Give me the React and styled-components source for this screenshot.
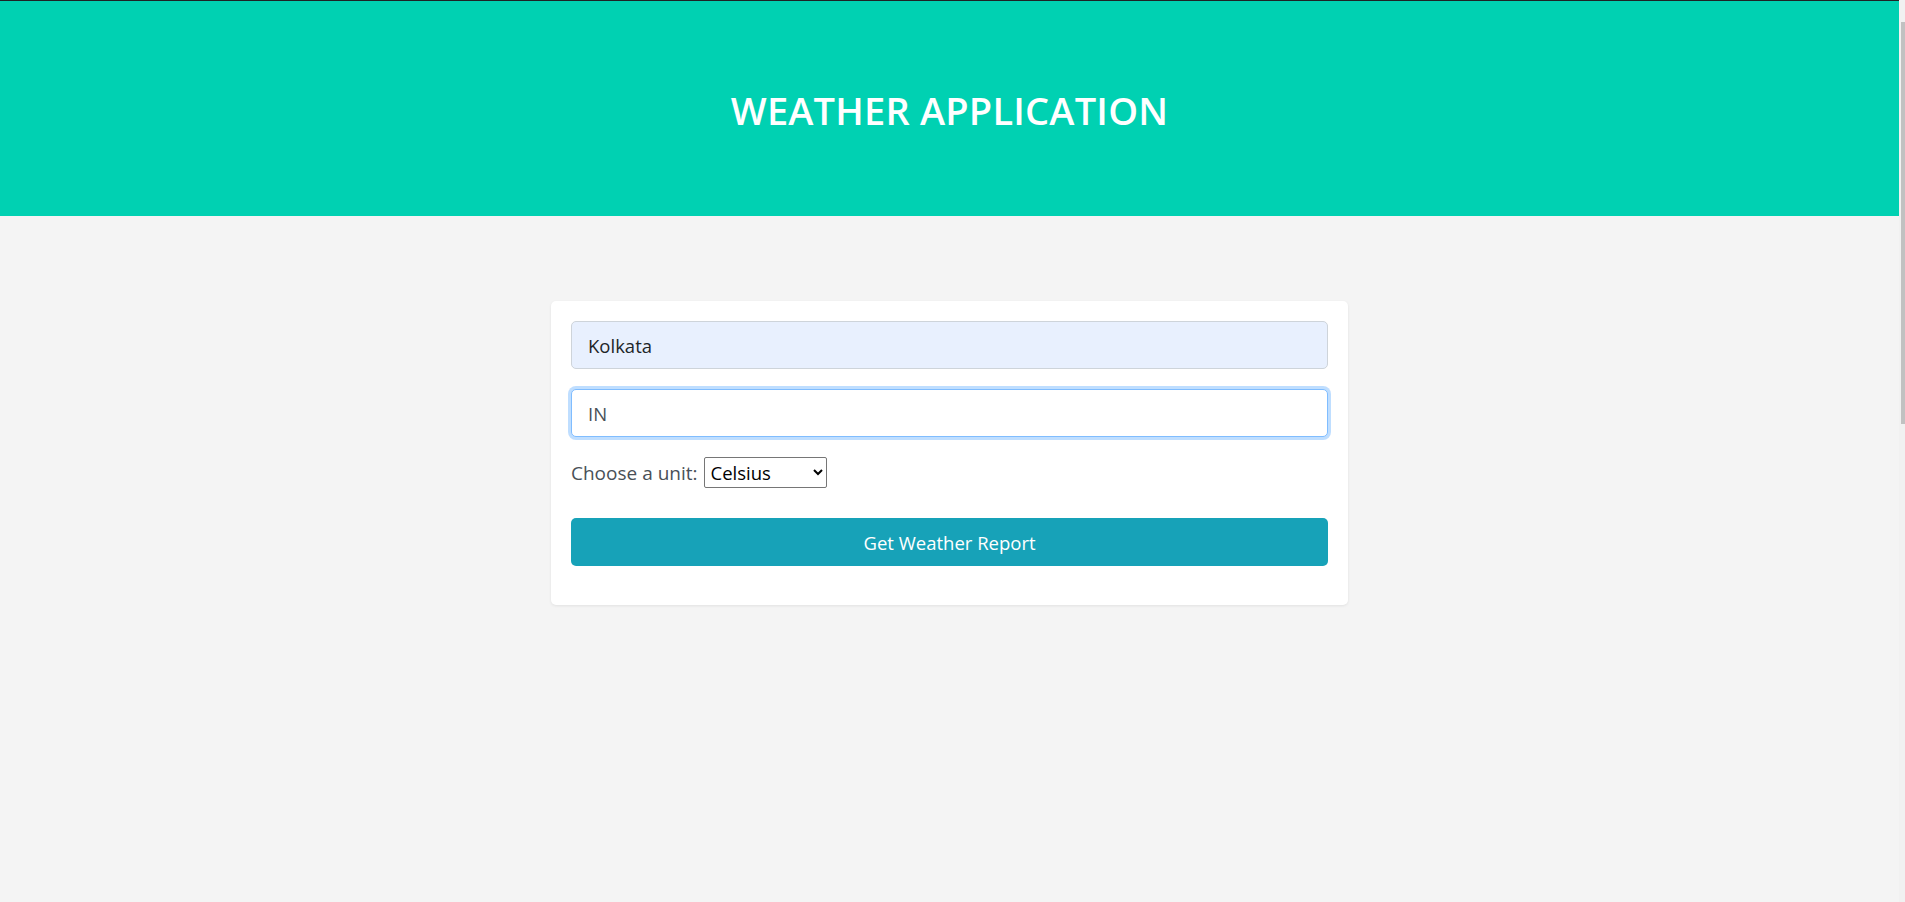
import React, { useState } from "react";
import styled, { createGlobalStyle } from "styled-components";

const GlobalStyle = createGlobalStyle`
  body {
    margin: 0;
    background-color: #f4f4f4;
    font-family: "Open Sans", "Noto Sans", sans-serif;
    color: #212529;
  }
  * {
    box-sizing: border-box;
  }
`;

const Shell = styled.div`
  display: flex;
  height: 100vh;
  overflow: hidden;
`;

const Page = styled.div`
  flex: 1;
  min-width: 0;
`;

/* window scrollbar, drawn since the page is shown as scrolled */
const ScrollTrack = styled.div`
  width: 6px;
  background: #f1f1f1;
  padding: 22px 0 0 2px;
`;

const ScrollThumb = styled.div`
  height: 402px;
  background: #c1c1c1;
`;

const Header = styled.header`
  background-color: #00d1b2;
  border-top: 1px solid #1f2326;
  height: 216px;
  display: flex;
  align-items: center;
  justify-content: center;
`;

const Title = styled.h1`
  margin: 2px 0 0;
  color: #fff;
  font-size: 38px;
  font-weight: 600;
  letter-spacing: 0.2px;
`;

const Card = styled.form`
  width: 797px;
  margin: 85px auto 0;
  background: #fff;
  border-radius: 5px;
  box-shadow: 0 1px 3px rgba(0, 0, 0, 0.08);
  padding: 20px 20px 39px;
  display: flex;
  flex-direction: column;
`;

const Input = styled.input`
  height: 48px;
  width: 100%;
  padding: 8px 16px;
  font-family: inherit;
  font-size: 18.5px;
  color: ${(p) => (p.$autofilled ? "#212529" : "#495057")};
  background-color: ${(p) => (p.$autofilled ? "#e8f0fe" : "#fff")};
  border: 1px solid ${(p) => (p.$focused ? "#80bdff" : "#ced4da")};
  border-radius: 5px;
  box-shadow: ${(p) => (p.$focused ? "0 0 0 3px rgba(0, 123, 255, 0.25)" : "none")};
  outline: none;
  margin-bottom: 20px;
`;

const UnitRow = styled.div`
  display: flex;
  align-items: center;
  gap: 6px;
  margin-bottom: 30px;
`;

const Label = styled.label`
  font-size: 19px;
  color: #495057;
`;

const Select = styled.select`
  width: 123px;
  height: 31px;
  font-family: inherit;
  font-size: 18.5px;
  color: #000;
  background: #fff;
  border: 1px solid #767676;
  border-radius: 2px;
  padding: 0 2px;
`;

const Button = styled.button`
  height: 48px;
  width: 100%;
  background-color: #17a2b8;
  color: #fff;
  border: none;
  border-radius: 5px;
  font-family: inherit;
  font-size: 18.5px;
  cursor: pointer;
`;

export default function App() {
  const [city, setCity] = useState("Kolkata");
  const [country, setCountry] = useState("IN");
  const [unit, setUnit] = useState("metric");

  return (
    <Shell>
      <GlobalStyle />
      <Page>
        <Header>
          <Title>WEATHER APPLICATION</Title>
        </Header>
        <Card onSubmit={(e) => e.preventDefault()}>
          <Input
            $autofilled
            value={city}
            onChange={(e) => setCity(e.target.value)}
            placeholder="City"
          />
          <Input
            $focused
            value={country}
            onChange={(e) => setCountry(e.target.value)}
            placeholder="Country"
          />
          <UnitRow>
            <Label htmlFor="unit">Choose a unit:</Label>
            <Select id="unit" value={unit} onChange={(e) => setUnit(e.target.value)}>
              <option value="metric">Celsius</option>
              <option value="imperial">Fahrenheit</option>
            </Select>
          </UnitRow>
          <Button type="submit">Get Weather Report</Button>
        </Card>
      </Page>
      <ScrollTrack>
        <ScrollThumb />
      </ScrollTrack>
    </Shell>
  );
}
